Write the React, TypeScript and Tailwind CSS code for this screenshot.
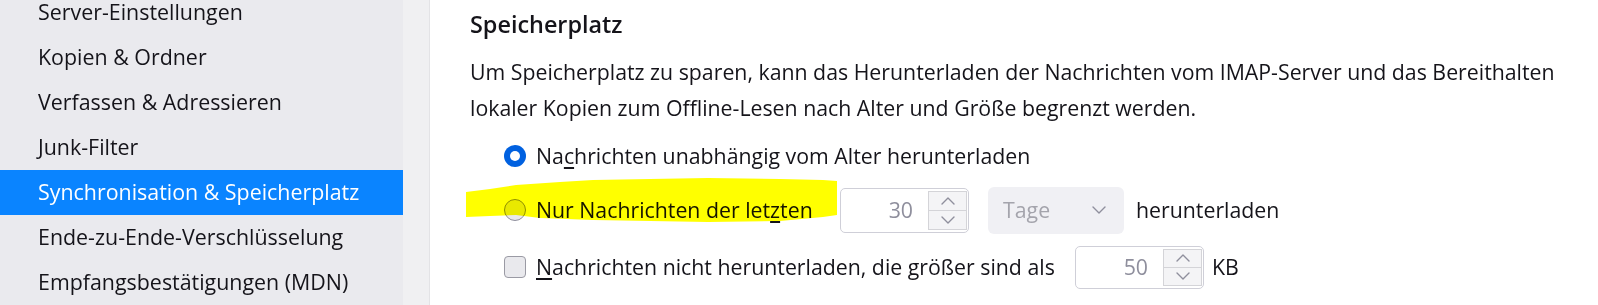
import React from 'react';

const sidebarItems = [
  "Server-Einstellungen",
  "Kopien & Ordner",
  "Verfassen & Adressieren",
  "Junk-Filter",
  "Synchronisation & Speicherplatz",
  "Ende-zu-Ende-Verschlüsselung",
  "Empfangsbestätigungen (MDN)",
];

function Chevron({ dir }: { dir: "up" | "down" }) {
  return (
    <svg width="14" height="8" viewBox="0 0 14 8" fill="none">
      <polyline
        points={dir === "up" ? "1,7 7,1 13,7" : "1,1 7,7 13,1"}
        stroke="#8f8f9d"
        strokeWidth="1.4"
        strokeLinecap="round"
        strokeLinejoin="round"
      />
    </svg>
  );
}

function NumberBox({ value, heightClass }: { value: string; heightClass: string }) {
  return (
    <div className={`flex w-[129px] shrink-0 ${heightClass} rounded-[5px] border border-[#cfcfd8] bg-white`}>
      <div className="flex flex-1 items-center justify-end pr-[15px] text-[#8f8f9d]">{value}</div>
      <div className="my-[2px] mr-[1px] flex w-[39px] flex-col border border-[#d4d4d8] bg-[#f4f4f6]">
        <div className="flex flex-1 items-center justify-center border-b border-[#d4d4d8]">
          <Chevron dir="up" />
        </div>
        <div className="flex flex-1 items-center justify-center">
          <Chevron dir="down" />
        </div>
      </div>
    </div>
  );
}

export default function App() {
  return (
    <div
      className="relative flex h-[305px] w-[1598px] overflow-hidden bg-white text-[#15141a]"
      style={{ fontFamily: '"Open Sans", "Noto Sans", sans-serif' }}
    >
      {/* Sidebar */}
      <div className="w-[403px] shrink-0 bg-[#eaeaee]">
        <ul className="-mt-[10px] text-[21.4px]">
          {sidebarItems.map((item) => (
            <li
              key={item}
              className={`flex h-[45px] items-center whitespace-nowrap pl-[38px] ${
                item.startsWith("Synchronisation") ? "bg-[#0a84ff] text-white" : ""
              }`}
            >
              {item}
            </li>
          ))}
        </ul>
      </div>
      <div className="w-[27px] shrink-0 border-r border-[#e3e3e6] bg-[#f0f0f2]" />

      {/* Content */}
      <div className="flex-1 pl-[40px] pt-[8px] text-[21.3px]">
        <h2 className="h-[32px] text-[23.4px] font-semibold leading-[32px]">Speicherplatz</h2>
        <p className="mt-[14px] whitespace-nowrap leading-[35.5px]">
          Um Speicherplatz zu sparen, kann das Herunterladen der Nachrichten vom IMAP-Server und das Bereithalten
          <br />
          lokaler Kopien zum Offline-Lesen nach Alter und Größe begrenzt werden.
        </p>

        <div className="ml-[34px] mt-[9px] flex h-[44px] items-center">
          <span className="flex h-[22px] w-[22px] shrink-0 items-center justify-center rounded-full bg-[#0061e0]">
            <span className="h-[10px] w-[10px] rounded-full bg-white" />
          </span>
          <span className="ml-[10px] whitespace-nowrap">
            Na<span className="underline underline-offset-[3px]">c</span>hrichten unabhängig vom Alter herunterladen
          </span>
        </div>

        <div className="ml-[34px] mt-[10px] flex h-[44px] items-center">
          <span className="h-[22px] w-[22px] shrink-0 rounded-full border border-[#8f8f9d] bg-[#e9e9ed]" />
          <span className="ml-[10px] w-[304px] shrink-0 whitespace-nowrap">
            Nur Nachrichten der let<span className="underline underline-offset-[3px]">z</span>ten
          </span>
          <NumberBox value="30" heightClass="h-[45px]" />
          <div className="ml-[19px] flex h-[47px] w-[136px] shrink-0 items-center justify-between rounded-[6px] bg-[#f0f0f4] pl-[15px] pr-[18px] text-[#a4a4ac]">
            <span>Tage</span>
            <Chevron dir="down" />
          </div>
          <span className="ml-[12px] whitespace-nowrap">herunterladen</span>
        </div>

        <div className="ml-[34px] mt-[13px] flex h-[44px] items-center">
          <span className="h-[22px] w-[22px] shrink-0 rounded-[4px] border border-[#9a9aa4] bg-[#e9e9ed]" />
          <span className="ml-[10px] w-[539px] shrink-0 whitespace-nowrap">
            <span className="underline underline-offset-[3px]">N</span>achrichten nicht herunterladen, die größer sind als
          </span>
          <NumberBox value="50" heightClass="h-[43px]" />
          <span className="ml-[8px]">KB</span>
        </div>
      </div>

      {/* Marker highlight over the second option */}
      <svg
        className="pointer-events-none absolute left-[460px] top-[172px] mix-blend-multiply"
        width="384"
        height="56"
        viewBox="460 172 384 56"
      >
        <path
          d="M466 192 L490 189 L516 185 L560 182 L593 180 L650 179 L708 178 L780 179 L823 180 L837 181 L837 215 L823 217 L780 221 L708 222 L650 221 L593 220 L540 218 L516 215 L490 216 L466 217 Z"
          fill="#ffff00"
        />
      </svg>
    </div>
  );
}
